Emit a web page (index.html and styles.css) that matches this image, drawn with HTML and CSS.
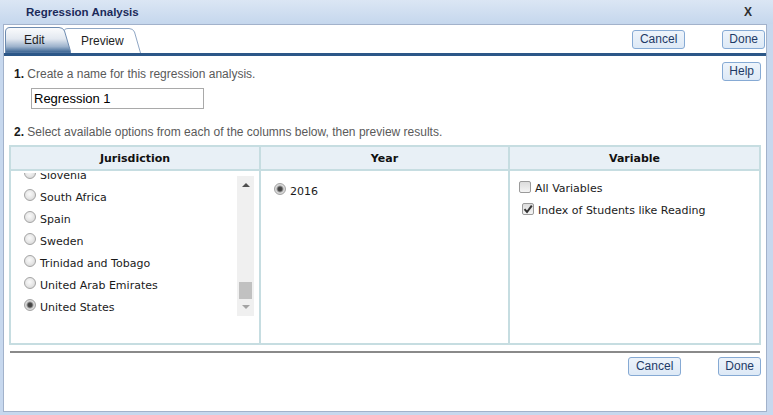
FILE: index.html
```html
<!DOCTYPE html>
<html>
<head>
<meta charset="utf-8">
<title>Regression Analysis</title>
<link rel="stylesheet" href="styles.css">
</head>
<body>
<div class="titlebar">
  <span class="title">Regression Analysis</span>
  <span class="close">X</span>
</div>
<div class="panel">
  <div class="tabbar">
    <div class="tabs">
      <div class="tab tab-edit">
        <svg class="tab-shape" width="66" height="26" viewBox="0 0 66 26">
          <defs>
            <linearGradient id="editg" x1="0" y1="0" x2="0" y2="1">
              <stop offset="0" stop-color="#fbfcfd"/>
              <stop offset="0.45" stop-color="#e2e8f0"/>
              <stop offset="0.75" stop-color="#9cb2cc"/>
              <stop offset="1" stop-color="#2e5a8b"/>
            </linearGradient>
          </defs>
          <path d="M0.5 26 V5 Q0.5 0.5 5 0.5 H54 Q58 0.5 59.5 4 L66 26 Z" fill="url(#editg)" stroke="#6d8bb0" stroke-width="1"/>
        </svg>
        <span class="tab-label">Edit</span>
      </div>
      <div class="tab tab-preview">
        <svg class="tab-shape" width="78" height="25" viewBox="0 0 78 25">
          <path d="M0.5 25 V5 Q0.5 0.5 5 0.5 H66 Q70 0.5 71.5 4 L77.5 25" fill="#ffffff" stroke="#8ea6c4" stroke-width="1"/>
        </svg>
        <span class="tab-label">Preview</span>
      </div>
    </div>
    <div class="top-actions">
      <button class="btn">Cancel</button>
      <button class="btn">Done</button>
    </div>
  </div>

  <div class="content">
    <div class="step1">
      <p class="step"><b>1.</b> Create a name for this regression analysis.</p>
      <button class="btn">Help</button>
    </div>
    <input class="name-input" type="text" value="Regression 1">
    <p class="step step2"><b>2.</b> Select available options from each of the columns below, then preview results.</p>

    <div class="grid">
      <div class="head">Jurisdiction</div>
      <div class="head">Year</div>
      <div class="head">Variable</div>

      <div class="cell cell-jur">
        <div class="listbox">
          <ul class="list">
            <li class="item"><span class="radio"></span>Slovenia</li>
            <li class="item"><span class="radio"></span>South Africa</li>
            <li class="item"><span class="radio"></span>Spain</li>
            <li class="item"><span class="radio"></span>Sweden</li>
            <li class="item"><span class="radio"></span>Trinidad and Tobago</li>
            <li class="item"><span class="radio"></span>United Arab Emirates</li>
            <li class="item"><span class="radio checked"></span>United States</li>
          </ul>
          <div class="scrollbar">
            <span class="arrow-up"></span>
            <span class="thumb"></span>
            <span class="arrow-down"></span>
          </div>
        </div>
      </div>

      <div class="cell cell-year">
        <div class="item"><span class="radio checked"></span>2016</div>
      </div>

      <div class="cell cell-var">
        <div class="item"><span class="check"></span>All Variables</div>
        <div class="item item-sub"><span class="check checked"><svg width="10" height="10" viewBox="0 0 10 10"><path d="M1.5 5.2 L4 8 L8.8 1.6" fill="none" stroke="#333" stroke-width="2"/></svg></span>Index of Students like Reading</div>
      </div>
    </div>

    <div class="rule"></div>
    <div class="bottom-actions">
      <button class="btn">Cancel</button>
      <button class="btn">Done</button>
    </div>
  </div>
</div>
</body>
</html>
```
FILE: styles.css
```css
html, body {
  margin: 0;
  padding: 0;
}
body {
  width: 773px;
  height: 415px;
  overflow: hidden;
  background: #c7d8ee;
  font-family: "Liberation Sans", Arial, sans-serif;
  font-size: 12px;
  color: #222;
}
.titlebar {
  height: 24px;
  display: flex;
  align-items: center;
  padding: 0 21px 0 26px;
  box-sizing: border-box;
  background: linear-gradient(#dbe6f4, #c5d7ed);
}
.title {
  flex: 1;
  font-weight: bold;
  font-size: 11.5px;
  color: #1b2a5a;
}
.close {
  font-weight: bold;
  font-size: 12px;
  color: #2e2e2e;
}
.panel {
  margin-left: 3px;
  width: 762px;
  height: 386px;
  border: 1px solid #a2b2cb;
  background: #fff;
}
.tabbar {
  display: flex;
  align-items: flex-end;
  height: 28px;
  border-bottom: 3px solid #2c5788;
  padding-left: 1px;
}
.tabs {
  display: flex;
  align-items: flex-end;
}
.tab {
  position: relative;
  display: flex;
  align-items: center;
  box-sizing: border-box;
  color: #1e1e1e;
  font-size: 12px;
}
.tab-shape {
  position: absolute;
  left: 0;
  top: 0;
}
.tab-label {
  position: relative;
}
.tab-edit {
  width: 66px;
  height: 26px;
  padding-left: 19px;
  z-index: 2;
}
.tab-preview {
  width: 78px;
  height: 25px;
  padding: 1px 0 0 18px;
  margin-left: -8px;
  z-index: 1;
}
.top-actions {
  margin-left: auto;
  margin-right: 1px;
  align-self: flex-start;
  margin-top: 5px;
  display: flex;
  gap: 37px;
}
.btn {
  height: 19px;
  padding: 0 6px;
  border: 1px solid #86aad4;
  border-radius: 3px;
  background: linear-gradient(#eef4fb, #dde9f6);
  font-family: "Liberation Sans", Arial, sans-serif;
  font-size: 12px;
  color: #1e3a66;
  line-height: 17px;
  box-sizing: border-box;
}
.top-actions .btn:first-child,
.bottom-actions .btn:first-child {
  padding: 0 7px;
}
.content {
  padding: 0 5px;
}
.step1 {
  display: flex;
  align-items: center;
  margin-top: 6px;
  height: 19px;
}
.step {
  margin: 0 0 0 5px;
  font-size: 12px;
  color: #5a5a5a;
  flex: 1;
  padding-top: 4px;
}
.step b {
  color: #1a1a1a;
}
.name-input {
  display: block;
  margin: 7px 0 0 22px;
  width: 173px;
  height: 21px;
  box-sizing: border-box;
  border: 1px solid #a9a9a9;
  padding: 0 2px;
  font-family: "Liberation Sans", Arial, sans-serif;
  font-size: 13px;
  color: #000;
  outline: none;
}
.step2 {
  margin-top: 16px;
  padding-top: 0;
  line-height: 14px;
}
.grid {
  margin-top: 6px;
  display: grid;
  grid-template-columns: 248px 247px 249px;
  grid-template-rows: 22px 172px;
  gap: 2px;
  border: 2px solid #c6dde1;
  background: #c6dde1;
}
.head {
  background: #e8f0f6;
  font-family: "DejaVu Sans", Verdana, sans-serif;
  font-weight: bold;
  font-size: 11px;
  color: #111;
  display: flex;
  align-items: center;
  justify-content: center;
}
.cell {
  background: #fff;
  font-family: "DejaVu Sans", Verdana, sans-serif;
  font-size: 11px;
  color: #1a1a1a;
}
.cell-jur {
  padding: 2px 5px 0 9px;
}
.listbox {
  position: relative;
  height: 143px;
  overflow: hidden;
}
.list {
  list-style: none;
  margin: -9px 0 0 0;
  padding: 0 0 0 4px;
}
.item {
  height: 22px;
  display: flex;
  align-items: center;
  white-space: nowrap;
}
.radio {
  width: 12px;
  height: 12px;
  box-sizing: border-box;
  border-radius: 50%;
  border: 1px solid #a4a4a4;
  background: radial-gradient(circle at 45% 40%, #fafafa 0, #e9e9e9 45%, #cfcfcf 100%);
  margin: 0 4px 4px 0;
  flex: none;
}
.radio.checked {
  background: radial-gradient(circle at 50% 50%, #3e3e3e 0, #4a4a4a 2px, #9a9a9a 3px, #dcdcdc 4px, #c8c8c8 100%);
}
.scrollbar {
  position: absolute;
  top: 3px;
  right: 0;
  bottom: 0;
  width: 17px;
  background: #f0f0f0;
}
.arrow-up {
  position: absolute;
  left: 5px;
  top: 7px;
  width: 0;
  height: 0;
  border-left: 4px solid transparent;
  border-right: 4px solid transparent;
  border-bottom: 4px solid #505050;
}
.arrow-down {
  position: absolute;
  left: 5px;
  top: 129px;
  width: 0;
  height: 0;
  border-left: 4px solid transparent;
  border-right: 4px solid transparent;
  border-top: 4px solid #a3a3a3;
}
.thumb {
  position: absolute;
  left: 2px;
  top: 106px;
  width: 13px;
  height: 17px;
  background: #c1c1c1;
}
.cell-year {
  padding: 9px 0 0 13px;
}
.cell-year .item {
  height: 22px;
}
.cell-var {
  padding: 6px 0 0 9px;
}
.item-sub {
  padding-left: 3px;
}
.check {
  width: 12px;
  height: 12px;
  box-sizing: border-box;
  border: 1px solid #9a9a9a;
  border-radius: 2px;
  background: linear-gradient(#dcdcdc, #f4f4f4);
  margin: 0 4px 3px 0;
  flex: none;
  display: flex;
  align-items: center;
  justify-content: center;
}
.check svg {
  display: block;
}
.rule {
  margin: 6px 1px 0;
  height: 2px;
  background: #8a8a8a;
}
.bottom-actions {
  margin-top: 4px;
  display: flex;
  justify-content: flex-end;
  gap: 37px;
}
```
